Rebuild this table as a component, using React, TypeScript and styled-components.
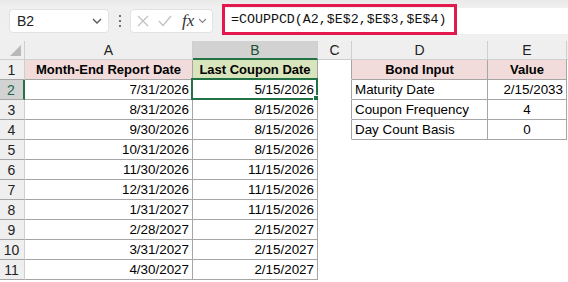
import { FC } from 'react'
import styled, { createGlobalStyle } from 'styled-components'

const GlobalStyle = createGlobalStyle`
  body {
    margin: 0;
    background: #ffffff;
    font-family: "Liberation Sans", Arial, sans-serif;
  }
`

const GREEN = '#217346'
const LINE = '#a6a6a6'
const HEAD_LINE = '#cfcfcf'

const reportDates = [
  ['7/31/2026', '5/15/2026'],
  ['8/31/2026', '8/15/2026'],
  ['9/30/2026', '8/15/2026'],
  ['10/31/2026', '8/15/2026'],
  ['11/30/2026', '11/15/2026'],
  ['12/31/2026', '11/15/2026'],
  ['1/31/2027', '11/15/2026'],
  ['2/28/2027', '2/15/2027'],
  ['3/31/2027', '2/15/2027'],
  ['4/30/2027', '2/15/2027'],
]

const bondInputs: [string, string, 'left' | 'center' | 'right'][] = [
  ['Maturity Date', '2/15/2033', 'right'],
  ['Coupon Frequency', '4', 'center'],
  ['Day Count Basis', '0', 'center'],
]

const Page = styled.div`
  width: 568px;
  height: 282px;
  overflow: hidden;
`

const Toolbar = styled.div`
  height: 41px;
  box-sizing: border-box;
  background: linear-gradient(#e9e9e9 0, #efefef 6px, #f0f0f0 100%);
  display: flex;
  align-items: center;
  padding-left: 9px;
`

const NameBox = styled.div`
  width: 100px;
  height: 24px;
  box-sizing: border-box;
  background: #fff;
  border: 1px solid #e2e2e2;
  border-radius: 4px;
  display: flex;
  align-items: center;
  justify-content: space-between;
  padding: 0 6px 0 7px;
  font-size: 14px;
  color: #222;
`

const Dots = styled.div`
  width: 21px;
  display: flex;
  flex-direction: column;
  align-items: center;
  gap: 3px;

  span {
    width: 2px;
    height: 2px;
    background: #444;
    border-radius: 1px;
  }
`

const FxBox = styled.div`
  width: 83px;
  height: 24px;
  box-sizing: border-box;
  background: #fff;
  border: 1px solid #e2e2e2;
  border-radius: 4px;
  display: flex;
  align-items: center;
  padding-left: 6px;
  gap: 9px;
`

const FxLabel = styled.span`
  font-family: "Liberation Serif", "Times New Roman", serif;
  font-style: italic;
  font-size: 17px;
  color: #333;
  margin-left: 1px;
  margin-right: -5px;
`

const FormulaArea = styled.div`
  flex: 1;
  height: 26px;
  margin-left: 9px;
  margin-top: 1px;
  background: #fff;
  display: flex;
  align-items: center;
`

const Highlight = styled.div`
  width: 235px;
  height: 31px;
  box-sizing: border-box;
  border: 3px solid #e3184c;
  display: flex;
  align-items: center;
  padding-left: 6px;
  font-family: "Liberation Mono", "Courier New", monospace;
  font-size: 13.3px;
  color: #111;
  margin-top: -3px;
`

const Sheet = styled.div`
  display: grid;
  grid-template-columns: 25px 168px 125px 34px 136px 79px 1fr;
  grid-template-rows: 19px repeat(11, 20px);
  font-size: 13.4px;
  color: #000;
`

const Corner = styled.div`
  background: #efefef;
  border-right: 1px solid ${HEAD_LINE};
  border-bottom: 1px solid ${HEAD_LINE};
  box-sizing: border-box;
  display: flex;
  align-items: flex-end;
  justify-content: flex-end;
  padding: 0 3px 3px 0;
`

const ColHead = styled.div<{ $active?: boolean }>`
  box-sizing: border-box;
  background: ${(p) => (p.$active ? '#d2d2d2' : '#efefef')};
  border-right: 1px solid ${HEAD_LINE};
  border-bottom: ${(p) => (p.$active ? `2px solid ${GREEN}` : `1px solid ${HEAD_LINE}`)};
  display: flex;
  align-items: center;
  justify-content: center;
  font-size: 14px;
  color: ${(p) => (p.$active ? '#1a5232' : '#222')};
`

const RowHead = styled.div<{ $active?: boolean }>`
  box-sizing: border-box;
  background: ${(p) => (p.$active ? '#d2d2d2' : '#efefef')};
  border-right: ${(p) => (p.$active ? `2px solid ${GREEN}` : `1px solid ${HEAD_LINE}`)};
  border-bottom: 1px solid ${LINE};
  display: flex;
  align-items: center;
  justify-content: center;
  font-size: 14px;
  padding-right: 1px;
  color: ${(p) => (p.$active ? '#1a6a50' : '#222')};
`

const Cell = styled.div<{
  $align?: 'left' | 'center' | 'right'
  $bg?: string
  $bold?: boolean
  $right?: string
  $bottom?: string
}>`
  position: relative;
  box-sizing: border-box;
  background: ${(p) => p.$bg || '#fff'};
  border-right: 1px solid ${(p) => p.$right || 'transparent'};
  border-bottom: 1px solid ${(p) => p.$bottom || 'transparent'};
  display: flex;
  align-items: center;
  justify-content: ${(p) =>
    p.$align === 'right' ? 'flex-end' : p.$align === 'center' ? 'center' : 'flex-start'};
  padding: 0 3px;
  font-weight: ${(p) => (p.$bold ? 700 : 400)};
  font-size: ${(p) => (p.$bold ? '13px' : '13.4px')};
  white-space: nowrap;
`

const Selection = styled.div`
  position: absolute;
  left: -2px;
  top: -2px;
  right: -1px;
  bottom: -1px;
  border: 2px solid ${GREEN};
  pointer-events: none;

  &::after {
    content: '';
    position: absolute;
    right: -4px;
    bottom: -4px;
    width: 5px;
    height: 5px;
    background: ${GREEN};
    border: 1px solid #fff;
  }
`

const Chevron: FC = () => (
  <svg width="10" height="6" viewBox="0 0 10 6">
    <polyline points="1,1 5,5 9,1" fill="none" stroke="#555" strokeWidth="1.3" />
  </svg>
)

const App: FC = () => {
  return (
    <Page>
      <GlobalStyle />
      <Toolbar>
        <NameBox>
          <span>B2</span>
          <Chevron />
        </NameBox>
        <Dots>
          <span />
          <span />
          <span />
        </Dots>
        <FxBox>
          <svg width="12" height="12" viewBox="0 0 12 12">
            <path d="M1 1 L11 11 M11 1 L1 11" stroke="#c2c2c2" strokeWidth="1.3" />
          </svg>
          <svg width="14" height="12" viewBox="0 0 14 12">
            <polyline points="1,6 5,10.5 13,1" fill="none" stroke="#c2c2c2" strokeWidth="1.3" />
          </svg>
          <FxLabel>fx</FxLabel>
          <svg width="9" height="6" viewBox="0 0 9 6">
            <polyline points="1,1 4.5,4.5 8,1" fill="none" stroke="#888" strokeWidth="1.2" />
          </svg>
        </FxBox>
        <FormulaArea>
          <Highlight>=COUPPCD(A2,$E$2,$E$3,$E$4)</Highlight>
        </FormulaArea>
      </Toolbar>

      <Sheet>
        <Corner>
          <svg width="11" height="11" viewBox="0 0 11 11">
            <polygon points="11,0 11,11 0,11" fill="#b9b9b9" />
          </svg>
        </Corner>
        <ColHead>A</ColHead>
        <ColHead $active>B</ColHead>
        <ColHead>C</ColHead>
        <ColHead>D</ColHead>
        <ColHead>E</ColHead>
        <ColHead />

        {/* row 1: headers */}
        <RowHead>1</RowHead>
        <Cell $align="center" $bold $bg="#f2dcdb" $right={LINE} $bottom={LINE}>
          Month-End Report Date
        </Cell>
        <Cell $align="center" $bold $bg="#d8e4bc" $right={LINE} $bottom={LINE}>
          Last Coupon Date
        </Cell>
        <Cell $right={LINE} />
        <Cell $align="center" $bold $bg="#f2dcdb" $right={LINE} $bottom={LINE}>
          Bond Input
        </Cell>
        <Cell $align="center" $bold $bg="#f2dcdb" $right={LINE} $bottom={LINE}>
          Value
        </Cell>
        <Cell />

        {reportDates.map(([reportDate, couponDate], i) => {
          const bond = bondInputs[i]
          return [
            <RowHead key={`h${i}`} $active={i === 0}>
              {i + 2}
            </RowHead>,
            <Cell key={`a${i}`} $align="right" $right={LINE} $bottom={LINE}>
              {reportDate}
            </Cell>,
            <Cell key={`b${i}`} $align="right" $right={LINE} $bottom={LINE}>
              {couponDate}
              {i === 0 && <Selection />}
            </Cell>,
            <Cell key={`c${i}`} $right={bond ? LINE : undefined} />,
            <Cell key={`d${i}`} $right={bond ? LINE : undefined} $bottom={bond ? LINE : undefined}>
              {bond?.[0]}
            </Cell>,
            <Cell
              key={`e${i}`}
              $align={bond?.[2]}
              $right={bond ? LINE : undefined}
              $bottom={bond ? LINE : undefined}
            >
              {bond?.[1]}
            </Cell>,
            <Cell key={`f${i}`} />,
          ]
        })}
      </Sheet>
    </Page>
  )
}

export default App
